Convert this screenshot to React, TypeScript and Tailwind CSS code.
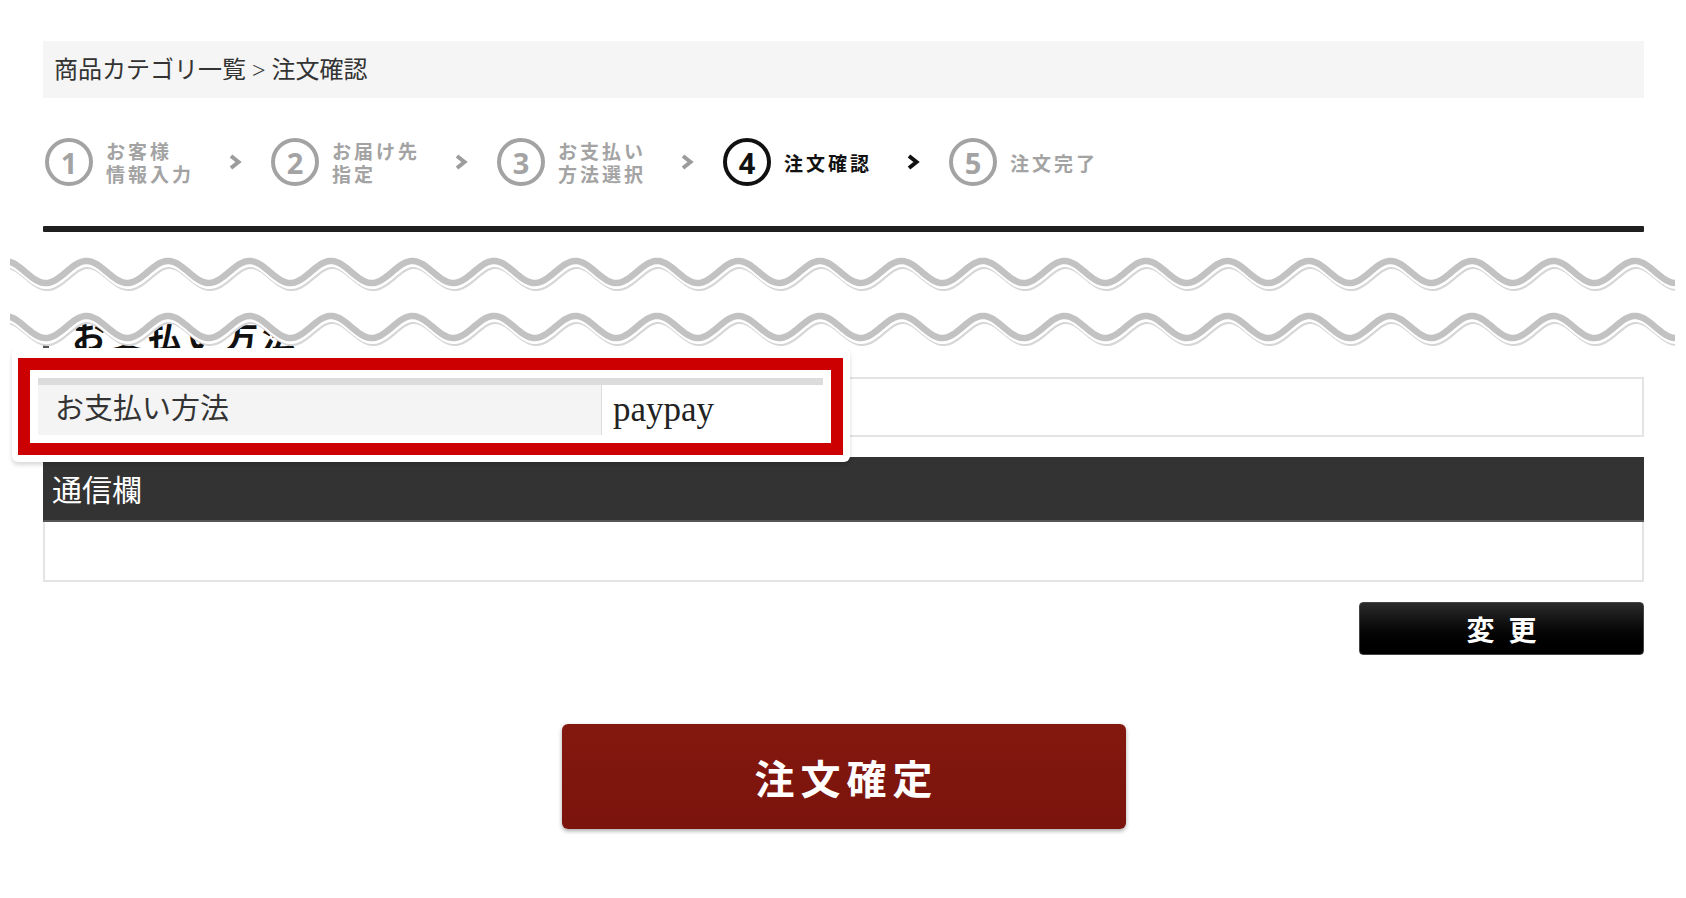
import React from 'react';

type Step = { n: string; lines: string[]; active?: boolean; last?: boolean };

const steps: Step[] = [
  { n: '1', lines: ['お客様', '情報入力'] },
  { n: '2', lines: ['お届け先', '指定'] },
  { n: '3', lines: ['お支払い', '方法選択'] },
  { n: '4', lines: ['注文確認'], active: true },
  { n: '5', lines: ['注文完了'], last: true },
];

// wave used for the "cut" marks between the two parts of the page
const PERIOD = 81.5;
const AMP = 11;
const wave = (mid: number, from = 5, to = 1682) => {
  const pts: string[] = [];
  for (let x = from; x <= to; x += 2) {
    pts.push(`${x},${(mid - AMP * Math.cos((2 * Math.PI * (x - 5)) / PERIOD)).toFixed(1)}`);
  }
  return pts.join(' ');
};

const Chevron = ({ dark }: { dark?: boolean }) => (
  <svg width="14" height="18" viewBox="0 0 14 18" className="shrink-0">
    <polyline
      points="3,3 10.5,9 3,15"
      fill="none"
      stroke={dark ? '#111' : '#9c9c9c'}
      strokeWidth="4"
      strokeLinejoin="miter"
    />
  </svg>
);

const Waves = () => {
  const mids = [32, 87];
  return (
    <svg
      width="1686"
      height="120"
      viewBox="0 0 1686 120"
      className="absolute left-0 top-[240px] pointer-events-none"
    >
      <defs>
        <clipPath id="cut">
          <rect x="10" y="0" width="1665" height="120" />
        </clipPath>
      </defs>
      <polygon points={`0,0 ${wave(87, 0, 1686)} 1686,0`} fill="#fff" />
      <g clipPath="url(#cut)">
        {mids.map((m) => (
          <g key={m}>
            <polyline points={wave(m)} transform="translate(1.5,4.5)" fill="none" stroke="#d6d6d6" strokeWidth="7" />
            <polyline points={wave(m)} transform="translate(0.5,2.5)" fill="none" stroke="#fff" strokeWidth="7" />
            <polyline points={wave(m)} fill="none" stroke="#c2c2c2" strokeWidth="6.5" strokeLinecap="round" />
          </g>
        ))}
      </g>
    </svg>
  );
};

export default function App() {
  return (
    <div className="relative w-full min-h-[898px] bg-white overflow-hidden font-['Noto_Sans_CJK_JP',sans-serif]">
      <div className="ml-[43px] w-[1601px] pt-[41px]">
        {/* breadcrumb */}
        <div className="h-[57px] bg-[#f5f5f5] flex items-center pl-[11px] text-[24px] text-[#333] font-['Liberation_Serif','Noto_Sans_CJK_JP',serif]">
          商品カテゴリ一覧 &gt; 注文確認
        </div>

        {/* steps */}
        <div className="mt-[40px] ml-[2px] flex h-[48px] items-center">
          {steps.map((s) => (
            <div key={s.n} className="flex w-[226px] shrink-0 items-center">
              <div
                className={
                  'flex h-[48px] w-[48px] shrink-0 items-center justify-center rounded-full border-[4px] ' +
                  (s.active ? 'border-[#111] text-[#111]' : 'border-[#a3a3a3] text-[#a3a3a3]')
                }
              >
                <span className="font-['Noto_Sans',sans-serif] text-[29px] font-bold leading-none">{s.n}</span>
              </div>
              <div
                className={
                  'ml-[13px] w-[122px] text-[19px] font-bold leading-[23px] tracking-[3px] ' +
                  (s.active ? 'text-[#111]' : 'text-[#a3a3a3]')
                }
              >
                {s.lines.map((l) => (
                  <div key={l}>{l}</div>
                ))}
              </div>
              {!s.last && <Chevron dark={s.active} />}
            </div>
          ))}
        </div>

        <div className="mt-[40px] h-[6px] rounded-[1px] bg-[#1f1f1f]" />

        {/* payment */}
        <h2 className="mt-[86px] h-[34px] border-l-[6px] border-[#555] pl-[23px] text-[34px] font-bold leading-[34px] tracking-[4px] text-[#111]">
          お支払い方法
        </h2>
        <div className="mt-[25px] h-[60px] border-2 border-[#e4e4e4] bg-white" />

        {/* message */}
        <div className="mt-[20px] flex h-[65px] items-center border-b-2 border-[#555] bg-[#333] pl-[9px] text-[30px] text-white">
          通信欄
        </div>
        <div className="h-[60px] border-2 border-t-0 border-[#e4e4e4] bg-white" />

        <div className="mt-[20px] flex justify-end">
          <button className="h-[53px] w-[285px] rounded-[4px] border border-[#444] bg-gradient-to-b from-[#2b2b2b] to-[#000] text-[28px] font-bold tracking-[14px] pl-[14px] text-white">
            変更
          </button>
        </div>

        <div className="mt-[69px] flex justify-center">
          <button className="h-[105px] w-[564px] rounded-[6px] bg-gradient-to-b from-[#84180f] to-[#7a140c] pl-[6px] text-[40px] font-bold tracking-[6px] text-white shadow-[0_2px_4px_rgba(0,0,0,0.35)]">
            注文確定
          </button>
        </div>
      </div>

      <Waves />

      {/* magnified callout */}
      <div className="absolute left-[12px] top-[348px] h-[114px] w-[838px] rounded-[6px] bg-white shadow-[0_3px_4px_rgba(0,0,0,0.15)]">
        <div className="ml-[6px] mt-[10px] h-[97px] w-[825px] border-[12px] border-[#cc0000] p-[8px]">
          <div className="h-[7px] bg-[#dcdcdc]" />
          <div className="flex h-[50px]">
            <div className="flex w-[564px] items-center border-r border-[#dcdcdc] bg-[#f4f4f4] pl-[17px] text-[29px] text-[#333] font-['Liberation_Serif','Noto_Sans_CJK_JP',serif]">
              お支払い方法
            </div>
            <div className="flex flex-1 items-center bg-white pl-[11px] text-[35px] text-[#222] font-['Liberation_Serif',serif]">
              paypay
            </div>
          </div>
        </div>
      </div>
    </div>
  );
}
